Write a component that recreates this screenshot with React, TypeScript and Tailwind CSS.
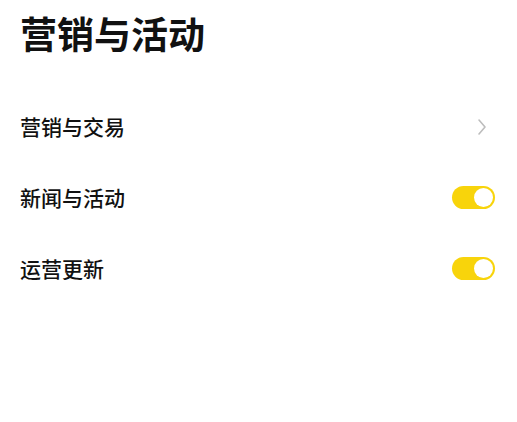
import React from "react";

const font = { fontFamily: '"Noto Sans CJK SC", "Noto Sans", sans-serif' };

function Toggle() {
  return (
    <div className="w-[43px] h-[23px] rounded-full bg-[#F8D40B] flex items-center justify-end pr-[2px]">
      <div className="w-[19px] h-[19px] rounded-full bg-white" />
    </div>
  );
}

function Chevron() {
  return (
    <svg width="10" height="18" viewBox="0 0 10 18" className="mr-[8px]">
      <path d="M2 2 L8 9 L2 16" fill="none" stroke="#bdbdbd" strokeWidth="1.6" strokeLinecap="round" strokeLinejoin="round" />
    </svg>
  );
}

export default function App() {
  const rows: { label: string; kind: "chevron" | "toggle" }[] = [
    { label: "营销与交易", kind: "chevron" },
    { label: "新闻与活动", kind: "toggle" },
    { label: "运营更新", kind: "toggle" },
  ];
  return (
    <div className="w-[517px] h-[422px] bg-white text-[#111]" style={font}>
      <div className="pt-[9px] pl-[20px]">
        <h1 className="text-[37px] leading-[48px] font-bold">营销与活动</h1>
      </div>
      <div className="mt-[34px]">
        {rows.map((r) => (
          <div key={r.label} className="h-[71px] flex items-center justify-between pl-[20px] pr-[22px]">
            <span className="text-[21px] leading-[28px] font-medium -mt-[2px]">{r.label}</span>
            {r.kind === "toggle" ? <Toggle /> : <Chevron />}
          </div>
        ))}
      </div>
    </div>
  );
}
